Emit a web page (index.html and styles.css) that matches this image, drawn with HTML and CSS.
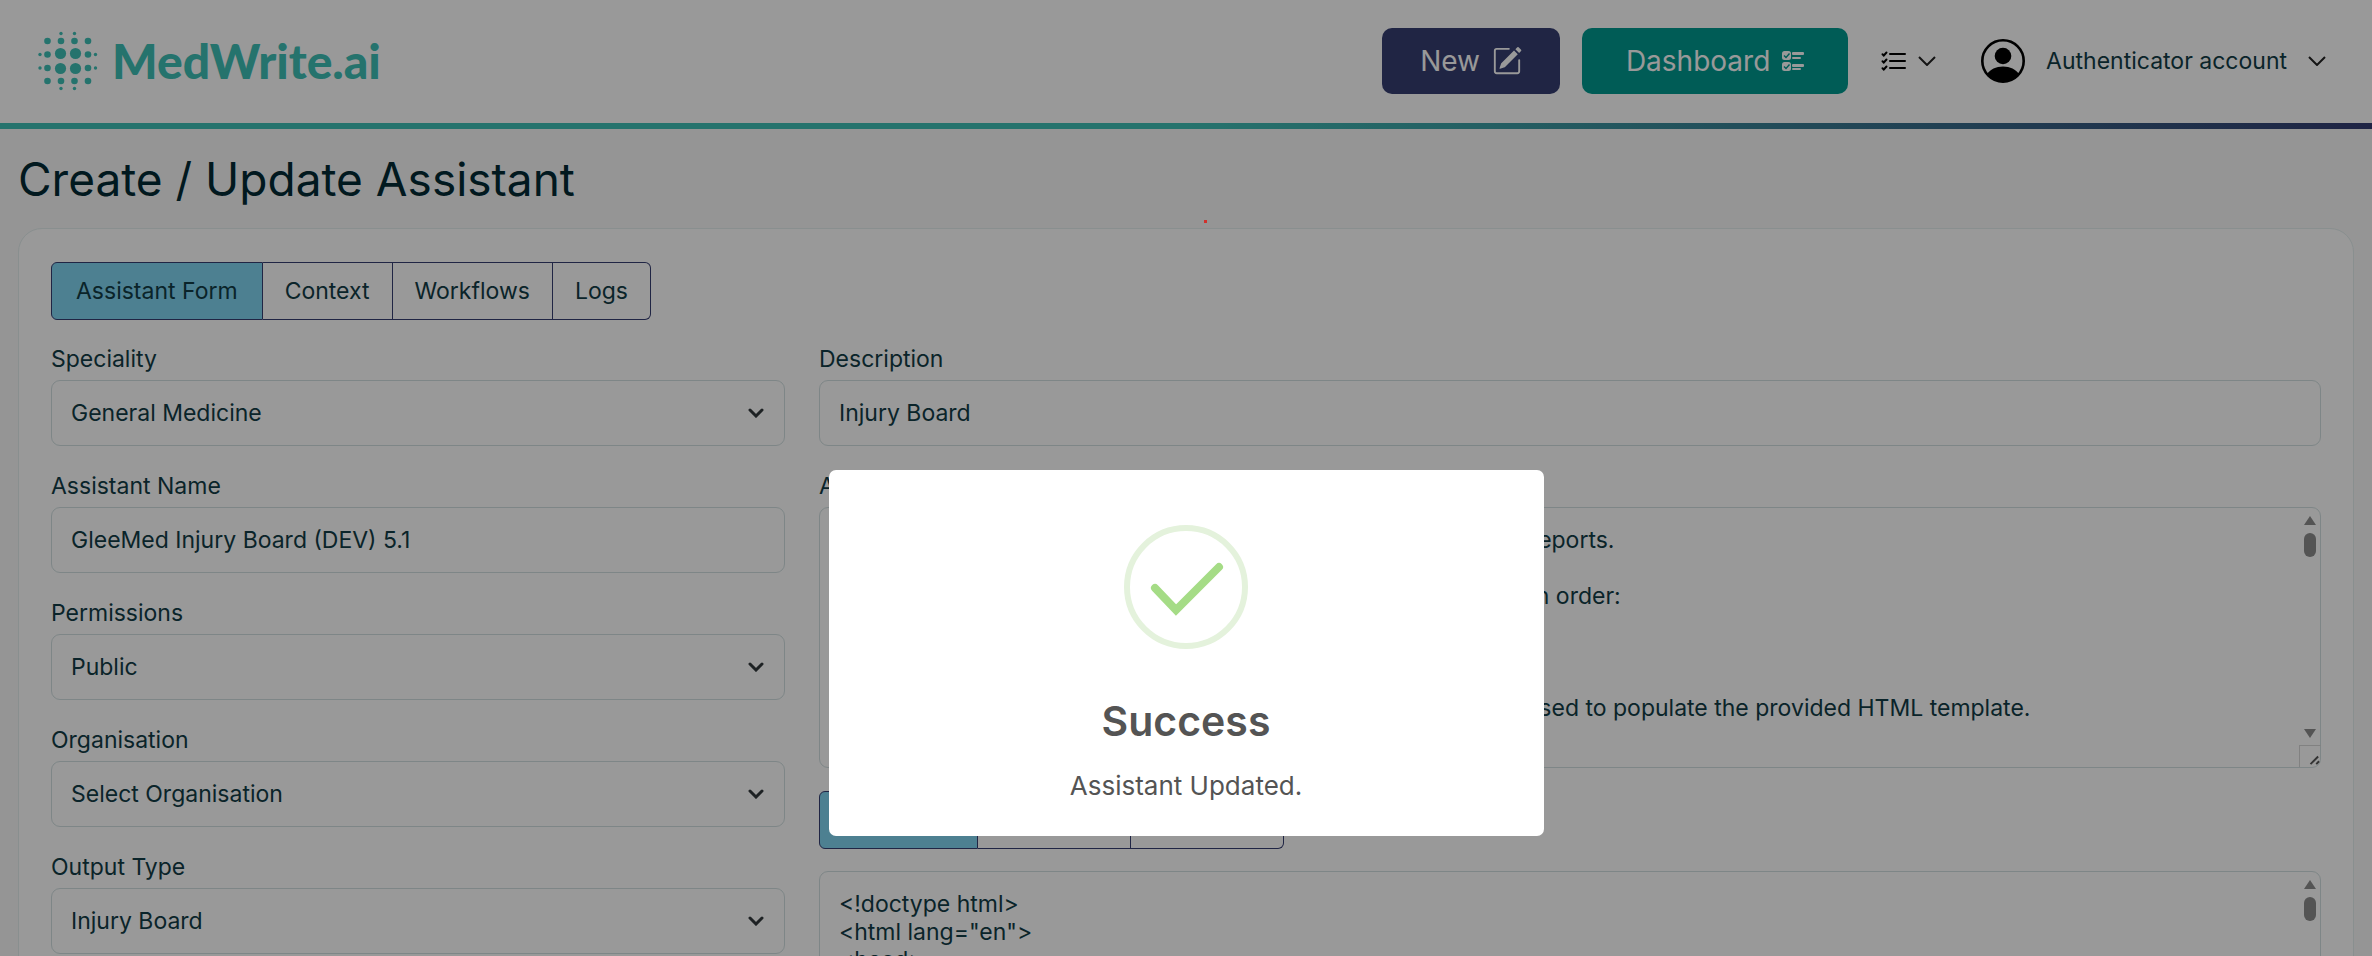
FILE: index.html
```
<!DOCTYPE html>
<html lang="en">
<head>
  <meta charset="UTF-8" />
  <meta name="viewport" content="width=device-width, initial-scale=1.0" />
  <title>MedWrite.ai - Create / Update Assistant</title>
  <link rel="stylesheet" href="styles.css">
</head>
<body>
  <header class="topbar">
    <a class="logo" href="#">
      <svg width="60" height="60" viewBox="0 0 60 60" fill="currentColor" aria-hidden="true">
        <circle cx="23" cy="2.500" r="1.700"/><circle cx="36.500" cy="2.500" r="1.700"/>
        <circle cx="9.500" cy="10" r="3.300"/><circle cx="23" cy="10" r="3.300"/><circle cx="36.500" cy="10" r="3.300"/><circle cx="50" cy="10" r="3.300"/>
        <circle cx="2" cy="23.500" r="1.700"/><circle cx="9.500" cy="23.500" r="3.300"/><circle cx="22.500" cy="22.500" r="5.600"/><circle cx="37.500" cy="22.500" r="5.600"/><circle cx="50" cy="23.500" r="3.300"/><circle cx="57.500" cy="23.500" r="1.700"/>
        <circle cx="2" cy="37" r="1.700"/><circle cx="9.500" cy="37" r="3.300"/><circle cx="22.500" cy="37.500" r="5.600"/><circle cx="37.500" cy="37.500" r="5.600"/><circle cx="50" cy="37" r="3.300"/><circle cx="57.500" cy="37" r="1.700"/>
        <circle cx="9.500" cy="50" r="3.300"/><circle cx="23" cy="50" r="3.300"/><circle cx="36.500" cy="50" r="3.300"/><circle cx="50" cy="50" r="3.300"/>
        <circle cx="23" cy="57.500" r="1.700"/><circle cx="36.500" cy="57.500" r="1.700"/>
      </svg>
      <span>MedWrite.ai</span>
    </a>

    <nav class="actions">
      <button type="button" class="btn btn-new">
        New
        <svg width="30" height="30" viewBox="0 0 16 16" fill="currentColor" aria-hidden="true">
          <path d="M15.502 1.940a.5.5 0 0 1 0 .706L14.459 3.690l-2-2L13.502.646a.5.5 0 0 1 .707 0l1.293 1.293zm-1.750 2.456-2-2L4.939 9.210a.5.5 0 0 0-.121.196l-.805 2.414a.25.25 0 0 0 .316.316l2.414-.805a.5.5 0 0 0 .196-.12l6.813-6.814z"/>
          <path fill-rule="evenodd" d="M1 13.500A1.500 1.500 0 0 0 2.500 15h11a1.500 1.500 0 0 0 1.500-1.500v-6a.5.5 0 0 0-1 0v6a.5.5 0 0 1-.5.5h-11a.5.5 0 0 1-.5-.5v-11a.5.5 0 0 1 .5-.5H9a.5.5 0 0 0 0-1H2.500A1.500 1.500 0 0 0 1 2.500v11z"/>
        </svg>
      </button>
      <button type="button" class="btn btn-dashboard">
        Dashboard
        <svg width="22" height="22" viewBox="0 0 22 22" aria-hidden="true">
          <g fill="currentColor">
            <rect x="0" y="1" width="9" height="9" rx="2.500"/><rect x="0" y="12" width="9" height="9" rx="2.500"/>
            <rect x="10" y="2" width="12" height="3" rx="1"/><rect x="10" y="7" width="9" height="2" rx="1"/>
            <rect x="10" y="14" width="12" height="3" rx="1"/><rect x="10" y="18" width="9" height="2" rx="1"/>
          </g>
          <path d="M2 5.500l2 2 3.500-4M2 16.500l2 2 3.500-4" fill="none" stroke="#00998f" stroke-width="1.400"/>
        </svg>
      </button>
      <button type="button" class="menu menu-list" aria-label="Task lists">
        <svg width="26" height="20" viewBox="0 0 26 20" fill="none" stroke="currentColor" stroke-width="2" stroke-linecap="round" aria-hidden="true">
          <path d="M9 3h15M9 10h15M9 17h15"/>
          <path d="M1.500 3.200l1.300 1.300 2.700-3M1.500 10.200l1.300 1.300 2.700-3M1.500 17.200l1.300 1.300 2.700-3"/>
        </svg>
        <svg class="chevron" width="18" height="10" viewBox="0 0 18 10" aria-hidden="true"><path d="M1 1l8 8 8-8"/></svg>
      </button>
      <button type="button" class="menu menu-account">
        <svg width="44" height="44" viewBox="0 0 44 44" aria-hidden="true">
          <circle cx="22" cy="22" r="20.700" fill="none" stroke="#000" stroke-width="2.600"/>
          <circle cx="22" cy="17" r="8.300"/>
          <path d="M6 35c3-4.500 9-7.500 16-7.500S35 30.500 38 35c-4 5-9.500 8-16 8S10 40 6 35z"/>
        </svg>
        Authenticator account
        <svg class="chevron" width="18" height="10" viewBox="0 0 18 10" aria-hidden="true"><path d="M1 1l8 8 8-8"/></svg>
      </button>
    </nav>
  </header>

  <main>
    <h1>Create / Update Assistant</h1>

    <section class="card">
      <div class="tabs tabs-main">
        <button type="button" class="active">Assistant Form</button>
        <button type="button">Context</button>
        <button type="button">Workflows</button>
        <button type="button">Logs</button>
      </div>

      <form class="form-grid">
        <div>
          <div class="field">
            <label for="speciality">Speciality</label>
            <div class="select">
              <select id="speciality"><option>General Medicine</option></select>
              <svg width="16" height="10" viewBox="0 0 16 10" aria-hidden="true"><path d="M2 2l6 6 6-6"/></svg>
            </div>
          </div>
          <div class="field">
            <label for="name">Assistant Name</label>
            <input type="text" id="name" value="GleeMed Injury Board (DEV) 5.1">
          </div>
          <div class="field">
            <label for="permissions">Permissions</label>
            <div class="select">
              <select id="permissions"><option>Public</option></select>
              <svg width="16" height="10" viewBox="0 0 16 10" aria-hidden="true"><path d="M2 2l6 6 6-6"/></svg>
            </div>
          </div>
          <div class="field">
            <label for="organisation">Organisation</label>
            <div class="select">
              <select id="organisation"><option>Select Organisation</option></select>
              <svg width="16" height="10" viewBox="0 0 16 10" aria-hidden="true"><path d="M2 2l6 6 6-6"/></svg>
            </div>
          </div>
          <div class="field">
            <label for="output">Output Type</label>
            <div class="select">
              <select id="output"><option>Injury Board</option></select>
              <svg width="16" height="10" viewBox="0 0 16 10" aria-hidden="true"><path d="M2 2l6 6 6-6"/></svg>
            </div>
          </div>
        </div>

        <div class="wide">
          <div class="field">
            <label for="description">Description</label>
            <input type="text" id="description" value="Injury Board">
          </div>
          <div class="field field-prompt">
            <label for="prompt">Assistant Prompt</label>
            <div class="editor">
              <textarea id="prompt">You are a clinical assistant that produces GleeMed injury board reports.

You will be given the following three documents as your inputs, in order:
1. Transcript
2. Case notes

The information of the documents will be extracted and is then used to populate the provided HTML template.</textarea>
              <div class="scrollbar" aria-hidden="true">
                <i class="up"></i><i class="thumb"></i><i class="down"></i>
                <svg width="22" height="22" viewBox="0 0 22 22"><path d="M11 19l8-8M17 19l3-3"/></svg>
              </div>
            </div>
          </div>
          <div class="tabs tabs-code">
            <button type="button" class="active">Template</button>
            <button type="button">Preview</button>
            <button type="button">Variables</button>
          </div>
          <div class="editor">
            <textarea id="template" aria-label="Template">&lt;!doctype html&gt;
&lt;html lang="en"&gt;
&lt;head&gt;
&lt;meta charset="utf-8"&gt;</textarea>
            <div class="scrollbar" aria-hidden="true">
              <i class="up"></i><i class="thumb"></i><i class="down"></i>
              <svg width="22" height="22" viewBox="0 0 22 22"><path d="M11 19l8-8M17 19l3-3"/></svg>
            </div>
          </div>
        </div>
      </form>
    </section>
  </main>

  <div class="overlay">
    <span class="dot"></span>
    <div class="popup" role="dialog" aria-labelledby="popup-title">
      <svg width="124" height="124" viewBox="0 0 124 124" fill="none" aria-hidden="true">
        <circle cx="62" cy="62" r="59" stroke="#e4f2dc" stroke-width="6"/>
        <path d="M31 63l21 22 43-43" stroke="#a5dc86" stroke-width="8" stroke-linecap="round"/>
      </svg>
      <h2 id="popup-title">Success</h2>
      <p>Assistant Updated.</p>
    </div>
  </div>
</body>
</html>
```
FILE: styles.css
```
* {
  box-sizing: border-box;
}

html {
  overflow: hidden;
}

body {
  margin: 0;
  height: 100vh;
  overflow: hidden;
  position: relative;
  background: #f8f9f9;
  color: #123c46;
  font-family: Inter, sans-serif;
  font-size: 23px;
  line-height: 28px;
}

button,
input,
select,
textarea {
  font: inherit;
  color: inherit;
}

/* top bar */
.topbar {
  display: flex;
  align-items: center;
  justify-content: space-between;
  padding: 28px 46px 35px 38px;
  background: linear-gradient(90deg, #3fc0b6 50%, #343c72) bottom / 100% 6px no-repeat, #fff;
}

.logo {
  display: flex;
  align-items: center;
  gap: 14px;
  color: #3fc0b6;
  font-family: Lato, sans-serif;
  font-size: 48px;
  font-weight: 900;
  line-height: 60px;
  text-decoration: none;
}

.actions {
  display: flex;
  align-items: center;
}

.btn {
  display: flex;
  align-items: center;
  justify-content: center;
  gap: 12px;
  height: 66px;
  margin-right: 22px;
  border: none;
  border-radius: 10px;
  color: #fff;
  font-size: 28px;
}

.btn-new {
  width: 178px;
  background: #363e72;
}

.btn-dashboard {
  width: 266px;
  margin-right: 33px;
  background: #00998f;
}

.menu {
  display: flex;
  align-items: center;
  padding: 0;
  border: none;
  background: none;
}

.menu-list {
  gap: 11px;
  margin-right: 45px;
  color: #000;
}

.menu-account {
  gap: 21px;
}

.chevron {
  fill: none;
  stroke: #222;
  stroke-width: 2;
}

/* page */
main {
  padding: 24px 18px;
}

h1 {
  margin: 0 0 23px;
  color: #032b35;
  font-size: 46px;
  font-weight: 400;
  line-height: 52px;
}

.card {
  padding: 33px 32px;
  border: 1px solid #e4eeee;
  border-radius: 24px;
  background: #fff;
}

.tabs {
  display: flex;
}

.tabs button {
  height: 58px;
  padding: 0 22px;
  border: 1px solid #363e72;
  border-left-width: 0;
  background: none;
}

.tabs button:first-child {
  padding: 0 24px;
  border-left-width: 1px;
  border-radius: 6px 0 0 6px;
}

.tabs button:last-child {
  border-radius: 0 6px 6px 0;
}

.tabs .active {
  background: #80d5f2;
}

.tabs-main {
  margin-bottom: 25px;
}

.tabs-code {
  margin-bottom: 22px;
}

.tabs-code button {
  width: 153px;
}

.tabs-code .active {
  width: 159px;
}

.form-grid {
  display: grid;
  grid-template-columns: repeat(3, 1fr);
  gap: 34px;
}

.wide {
  grid-column: span 2;
}

.field {
  margin-bottom: 26px;
}

.field-prompt {
  margin-bottom: 23px;
}

.field label {
  display: block;
  margin-bottom: 7px;
}

input,
select,
textarea {
  display: block;
  width: 100%;
  border: 1px solid #d3e0e2;
  border-radius: 9px;
  background: #fff;
}

input,
select {
  height: 66px;
  padding: 0 19px;
  appearance: none;
}

.select {
  position: relative;
}

.select svg {
  position: absolute;
  top: 28px;
  right: 21px;
  fill: none;
  stroke: #33393c;
  stroke-width: 3;
  stroke-linecap: round;
}

.editor {
  position: relative;
}

textarea {
  height: 261px;
  padding: 18px 30px 18px 19px;
  resize: none;
  overflow: hidden;
}

.scrollbar {
  position: absolute;
  top: 1px;
  right: 0;
  bottom: 1px;
  width: 22px;
  display: flex;
  flex-direction: column;
  align-items: center;
  padding-top: 8px;
}

.scrollbar .up,
.scrollbar .down {
  border: 6px solid transparent;
  border-top-width: 0;
  border-bottom: 9px solid #8c8c8c;
}

.scrollbar .down {
  margin-top: auto;
  margin-bottom: 7px;
  transform: rotate(180deg);
}

.scrollbar .thumb {
  width: 12px;
  height: 24px;
  margin-top: 8px;
  border-radius: 6px;
  background: #8c8c8c;
}

.scrollbar svg {
  border-top: 1px solid #d8d8d8;
  border-left: 1px solid #d8d8d8;
  stroke: #555;
  stroke-width: 2;
}

/* success popup */
.overlay {
  position: absolute;
  inset: 0;
  display: flex;
  justify-content: center;
  align-items: flex-start;
  padding-top: 470px;
  background: rgba(0, 0, 0, 0.4);
}

.popup {
  display: flex;
  flex-direction: column;
  align-items: center;
  width: 715px;
  padding: 55px 24px 34px;
  border-radius: 7px;
  background: #fff;
  color: #545454;
}

.popup h2 {
  margin: 46px 0 22px;
  font-size: 41px;
  font-weight: 600;
  line-height: 52px;
}

.popup p {
  margin: 0;
  font-size: 26px;
  line-height: 33px;
}

.dot {
  position: absolute;
  top: 220px;
  left: 1204px;
  width: 3px;
  height: 3px;
  background: #d0302c;
}
```
